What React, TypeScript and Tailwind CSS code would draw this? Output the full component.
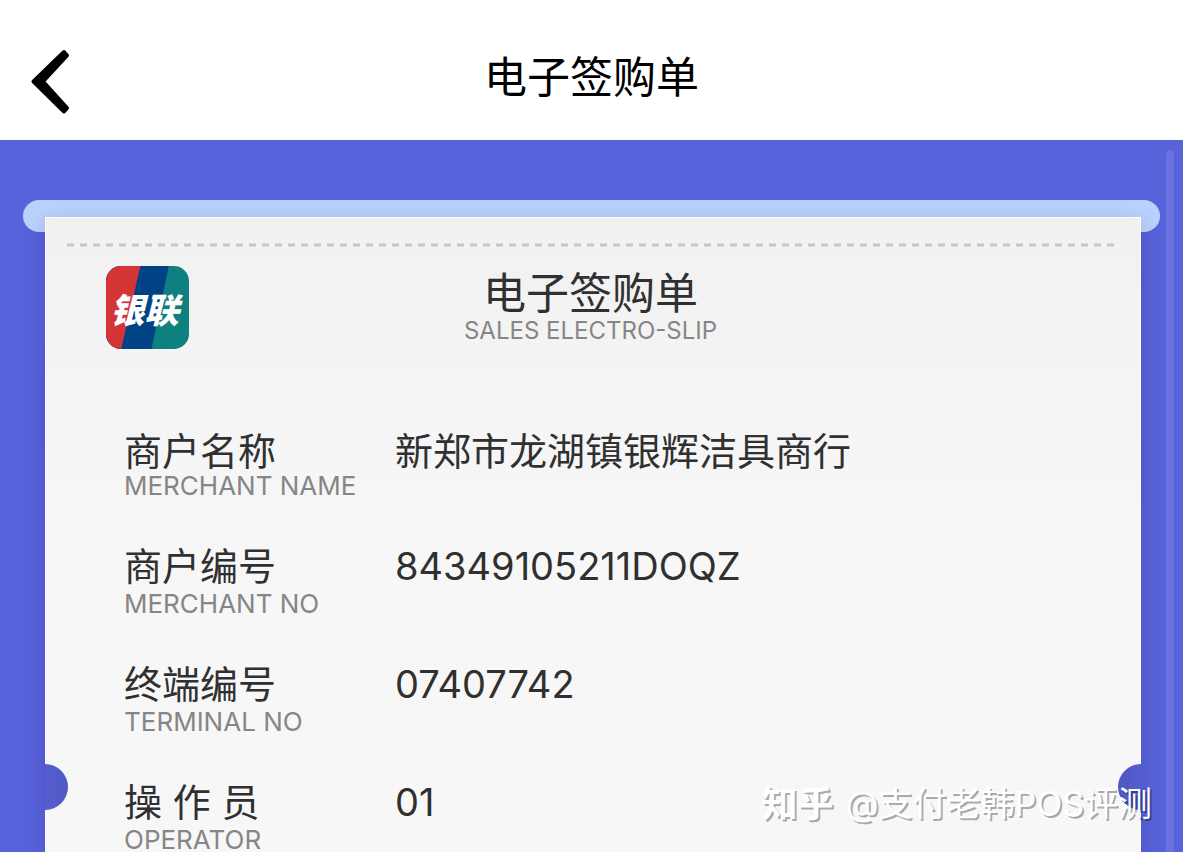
interface SlipRowProps {
  label: string;
  caption: string;
  value: string;
  tight?: boolean;
}

const rows: SlipRowProps[] = [
  { label: '商户名称', caption: 'MERCHANT NAME', value: '新郑市龙湖镇银辉洁具商行', tight: true },
  { label: '商户编号', caption: 'MERCHANT NO', value: '84349105211DOQZ' },
  { label: '终端编号', caption: 'TERMINAL NO', value: '07407742' },
  { label: '操 作 员', caption: 'OPERATOR', value: '01' },
];

function UnionPayLogo() {
  return (
    <svg viewBox="0 0 82 82" className="size-[83px] shrink-0" role="img" aria-label="银联">
      <defs>
        <clipPath id="logo-clip">
          <rect width="82" height="82" rx="15" />
        </clipPath>
      </defs>
      <g clipPath="url(#logo-clip)">
        <rect width="82" height="82" fill="#0f8080" />
        <path d="M0 0H62L45 82H0Z" fill="#004384" />
        <path d="M0 0H34L15 82H0Z" fill="#d33536" />
      </g>
      <text
        x="38"
        y="56"
        textAnchor="middle"
        fill="#fff"
        fontSize="34"
        fontWeight="900"
        fontStyle="italic"
        fontFamily="'Noto Sans CJK SC', sans-serif"
      >
        银联
      </text>
    </svg>
  );
}

function SlipRow({ label, caption, value, tight }: SlipRowProps) {
  const line = tight ? 'leading-[42px]' : 'leading-[48px]';

  return (
    <div className="flex">
      <dt className="w-[271px] shrink-0">
        <div className={`text-[38px] ${line}`}>{label}</div>
        <div className="text-[26px] leading-[28px] text-[#868686]">{caption}</div>
      </dt>
      <dd className={`text-[38px] ${line}`}>{value}</dd>
    </div>
  );
}

export default function App() {
  return (
    <div className="relative flex h-screen flex-col overflow-hidden bg-[#5862da] font-['Inter','Noto_Sans_CJK_SC',sans-serif] text-[#303030]">
      <header className="grid h-[140px] shrink-0 grid-cols-[1fr_auto_1fr] items-center bg-white px-7 pt-[14px] text-black">
        <button type="button" aria-label="返回" className="w-11">
          <svg viewBox="0 0 44 76" className="h-[76px] w-11" fill="currentColor" stroke="currentColor">
            <path
              d="M36 13L39 16.5L15 42.5L39 69L36 72.5L5.5 42.5Z"
              strokeWidth="4"
              strokeLinejoin="round"
            />
          </svg>
        </button>
        <h1 className="text-[43px] leading-[60px]">电子签购单</h1>
      </header>

      <main className="flex grow flex-col px-[23px] pt-[60px]">
        <div className="h-8 shrink-0 rounded-full bg-linear-to-b from-[#b7d1fd] to-[#bdd2fb]" />
        <section className="relative mr-[19px] -mt-[15px] ml-[22px] grow border-x border-t border-white/80 bg-linear-to-b from-[#f1f1f1] to-[#f7f7f7] to-50% shadow-[0_6px_20px_rgba(30,30,90,0.2)]">
          <svg className="mt-[25px] ml-[21px] block h-1 w-[calc(100%-47px)]" aria-hidden="true">
            <line x1="0" y1="2" x2="100%" y2="2" stroke="#c6c6c6" strokeWidth="3" strokeDasharray="7 6" />
          </svg>

          {/* Slip title */}
          <div className="mt-[19px] grid grid-cols-[1fr_auto_1fr] pr-[65px] pl-[60px]">
            <UnionPayLogo />
            <div className="text-center">
              <h2 className="text-[43px] leading-[54px]">电子签购单</h2>
              <p className="text-[24px] leading-[22px] text-[#868686]">SALES ELECTRO-SLIP</p>
            </div>
          </div>

          <dl className="mt-[81px] flex flex-col gap-[42px] pl-[78px]">
            {rows.map((row) => (
              <SlipRow key={row.caption} {...row} />
            ))}
          </dl>

          {/* Ticket notches */}
          <div className="absolute top-[546px] -left-px h-[46px] w-[23px] rounded-r-full bg-linear-to-r from-[#535dcf] to-[#4f59c2]" />
          <div className="absolute top-[546px] -right-px h-[46px] w-[23px] rounded-l-full bg-linear-to-l from-[#535dcf] to-[#4f59c2]" />
        </section>
      </main>

      <div className="absolute top-[150px] right-[9px] bottom-0 w-2 rounded-t-sm bg-[#6972df]" />
      <p className="absolute right-[31px] bottom-[24px] flex items-center gap-3 text-[34px] leading-[48px] text-white [text-shadow:2px_2px_0_rgba(0,0,0,0.33)]">
        <strong className="text-[36px] font-bold">知乎</strong>
        <span>@支付老韩POS评测</span>
      </p>
    </div>
  );
}
